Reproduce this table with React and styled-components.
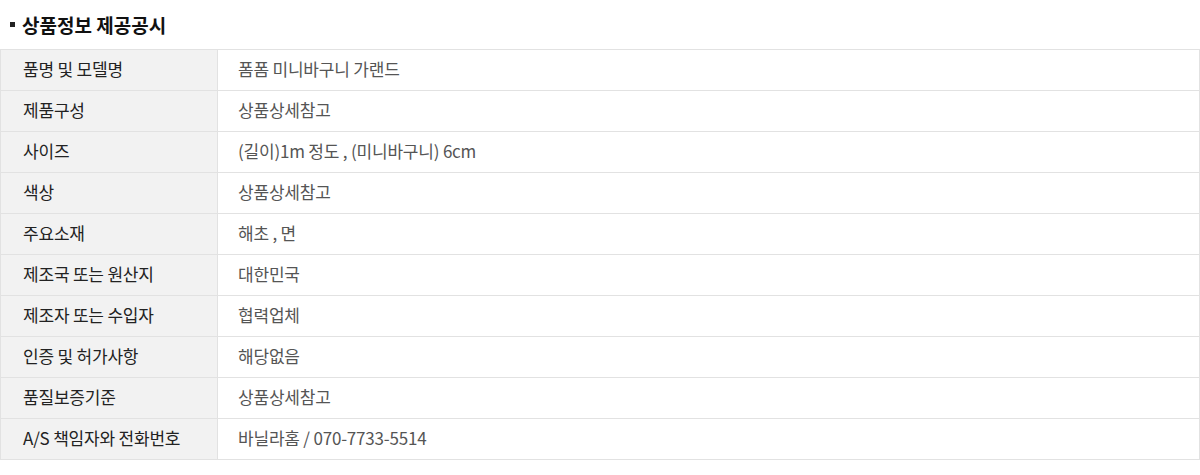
import styled, { createGlobalStyle } from 'styled-components'

const GlobalStyle = createGlobalStyle`
  body {
    margin: 0;
    background: #fff;
    font-family: "Noto Sans CJK KR", "Noto Sans", sans-serif;
  }
`

const Wrap = styled.div`
  width: 1200px;
  padding-top: 9px;
`

const Title = styled.h3`
  align-items: center;
  color: #111;
  display: flex;
  font-size: 19px;
  font-weight: 700;
  gap: 7px;
  height: 30px;
  margin: 0 0 10px;
  padding-left: 10px;
  &::before {
    background: #222;
    content: '';
    display: block;
    height: 5px;
    margin-top: 1px;
    width: 5px;
  }
`

const Table = styled.div`
  border-left: 1px solid #e2e2e2;
  border-right: 1px solid #e2e2e2;
  border-top: 1px solid #e2e2e2;
  display: grid;
  grid-template-columns: 217px 1fr;
`

const Cell = styled.div`
  align-items: center;
  border-bottom: 1px solid #e2e2e2;
  box-sizing: border-box;
  display: flex;
  font-size: 17px;
  height: 41px;
  letter-spacing: -0.2px;
  padding-bottom: 3px;
`

const Label = styled(Cell)`
  background: #f2f2f2;
  border-right: 1px solid #e2e2e2;
  color: #222;
  padding-left: 22px;
`

const Value = styled(Cell)`
  color: #555;
  padding-left: 20px;
`

const rows = [
  ['품명 및 모델명', '폼폼 미니바구니 가랜드'],
  ['제품구성', '상품상세참고'],
  ['사이즈', '(길이)1m 정도 , (미니바구니) 6cm'],
  ['색상', '상품상세참고'],
  ['주요소재', '해초 , 면'],
  ['제조국 또는 원산지', '대한민국'],
  ['제조자 또는 수입자', '협력업체'],
  ['인증 및 허가사항', '해당없음'],
  ['품질보증기준', '상품상세참고'],
  ['A/S 책임자와 전화번호', '바닐라홈 / 070-7733-5514'],
]

export default function App() {
  return (
    <Wrap>
      <GlobalStyle />
      <Title>상품정보 제공공시</Title>
      <Table>
        {rows.map(([label, value]) => (
          <>
            <Label key={label}>{label}</Label>
            <Value key={label + '-v'}>{value}</Value>
          </>
        ))}
      </Table>
    </Wrap>
  )
}
